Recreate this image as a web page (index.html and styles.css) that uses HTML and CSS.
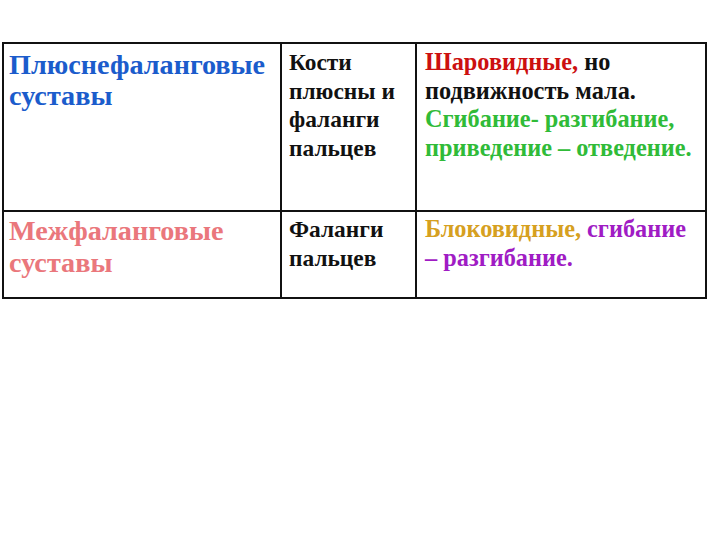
FILE: index.html
```html
<!DOCTYPE html>
<html lang="ru">
<head>
<meta charset="utf-8">
<link rel="stylesheet" href="styles.css">
</head>
<body>
<table class="joints">
  <colgroup>
    <col class="w1">
    <col class="w2">
    <col class="w3">
  </colgroup>
  <tr class="row-top">
    <td class="c1"><span class="blue big">Плюснефаланговые суставы</span></td>
    <td class="c2">Кости плюсны и фаланги пальцев</td>
    <td class="c3"><span class="red">Шаровидные,</span> но<br>подвижность мала.<br><span class="green">Сгибание- разгибание,<br>приведение – отведение.</span></td>
  </tr>
  <tr class="row-bottom">
    <td class="c1"><span class="pink big">Межфаланговые суставы</span></td>
    <td class="c2">Фаланги пальцев</td>
    <td class="c3"><span class="orange">Блоковидные,</span> <span class="purple">сгибание<br>– разгибание.</span></td>
  </tr>
</table>
</body>
</html>
```

FILE: styles.css
```css
html, body {
  margin: 0;
  padding: 0;
  background: #ffffff;
}
body {
  width: 720px;
  height: 540px;
  font-family: "Liberation Serif", "Times New Roman", serif;
  font-weight: bold;
  color: #111111;
}
.joints {
  border-collapse: collapse;
  margin: 42px 0 0 2px;
  table-layout: fixed;
  width: 703px;
}
.w1 { width: 278px; }
.w2 { width: 135px; }
.w3 { width: 290px; }
.joints td {
  border: 2px solid #111111;
  vertical-align: top;
  padding: 4px 4px 0 7px;
  white-space: nowrap;
}
.c1 { padding-left: 5px !important; }
.c2 {
  font-size: 23.4px;
  line-height: 28.5px;
  white-space: normal !important;
}
.c3 {
  font-size: 24.3px;
  line-height: 28.5px;
  padding-left: 8px !important;
}
.row-top td { height: 162px; }
.row-bottom td { height: 82px; padding-top: 3px; }
.big {
  font-size: 28.2px;
  line-height: 31px;
  display: block;
  margin-top: 1px;
  white-space: normal;
}
.row-bottom .big { margin-top: 0; line-height: 31.5px; }
.blue { color: #1b5ccc; }
.pink { color: #ea777c; }
.red { color: #cc1010; }
.green { color: #30bb38; }
.orange { color: #d6a020; }
.purple { color: #a01cc4; }
```
